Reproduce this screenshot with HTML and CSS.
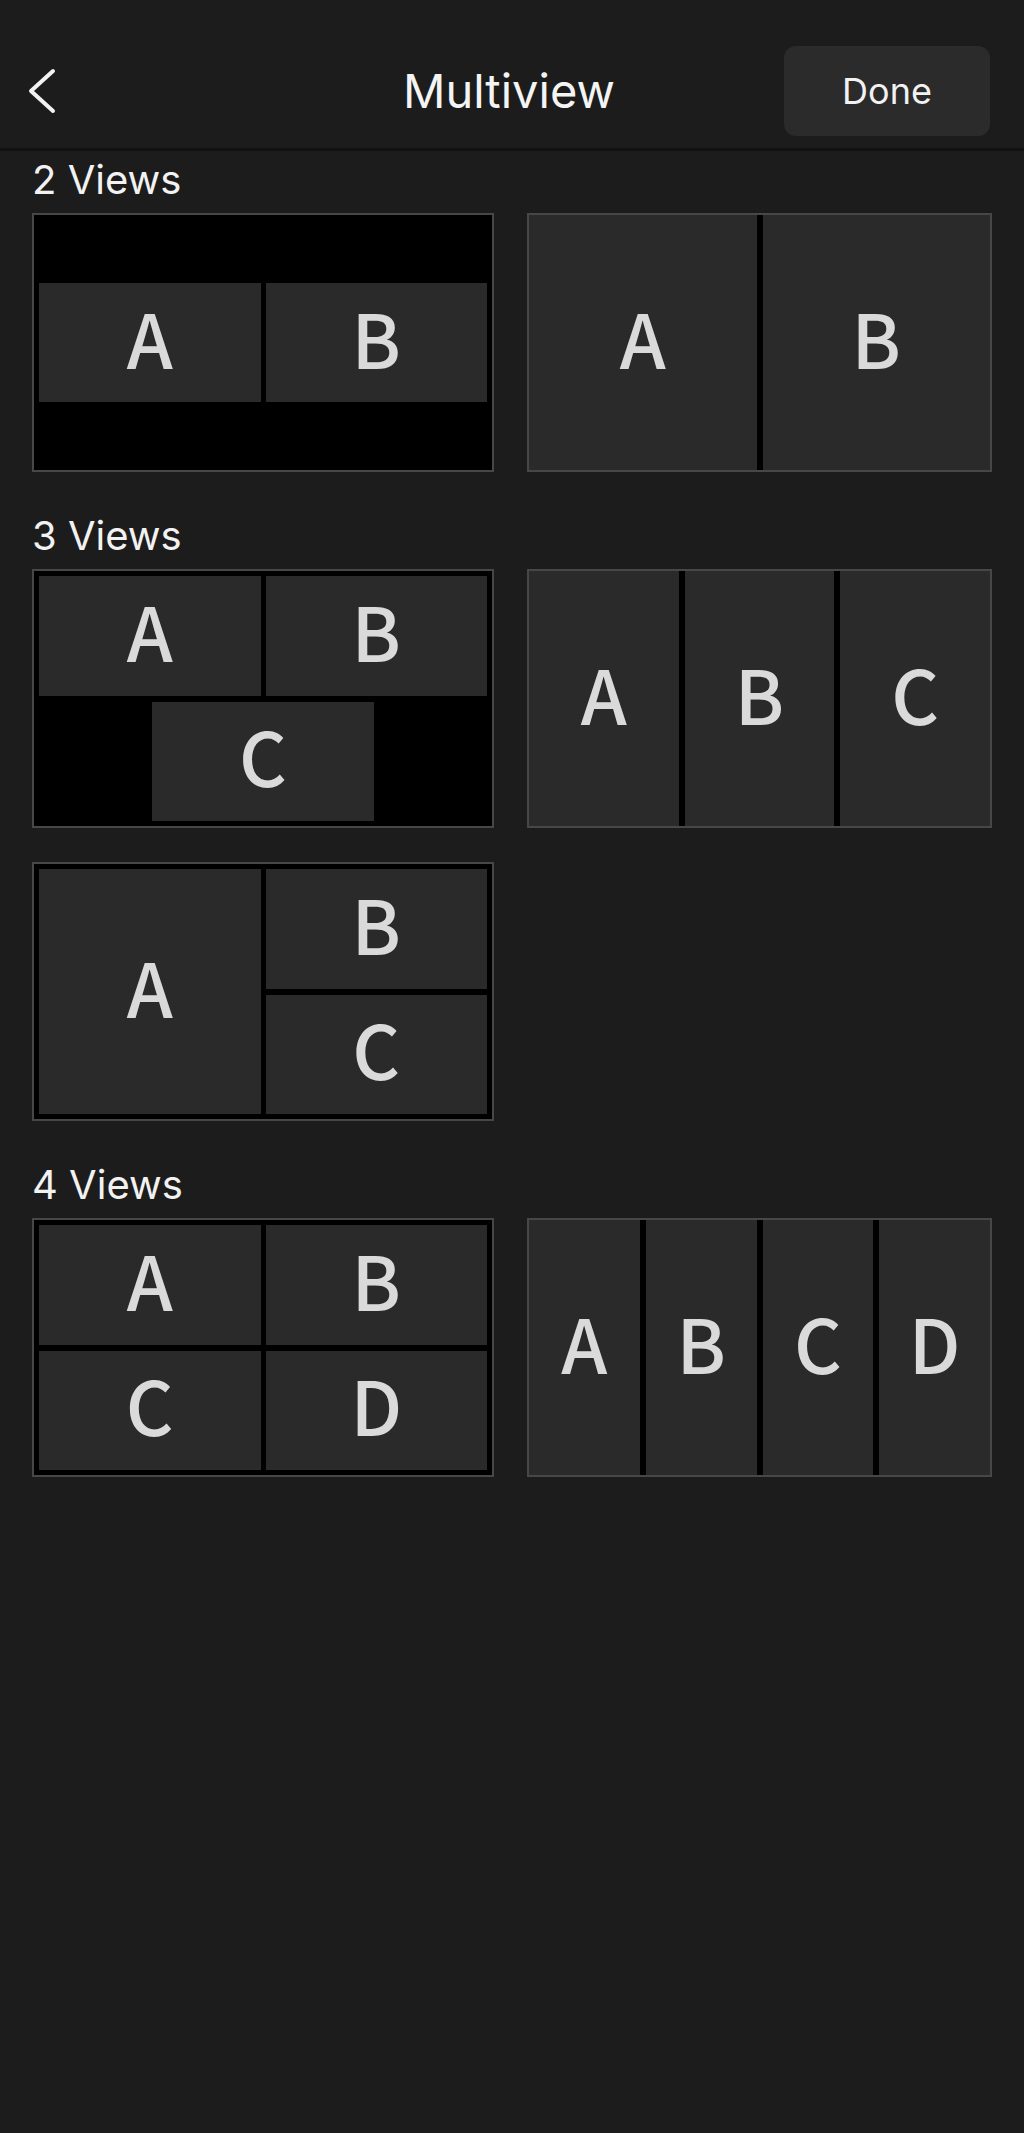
FILE: index.html
```html
<!DOCTYPE html>
<html>
<head>
<title>Multiview</title>
<meta charset="utf-8">
<link rel="stylesheet" href="styles.css">
</head>
<body>
<div class="bar">
	<div class="bar-left">
		<svg class="back" width="30" height="46" viewBox="0 0 30 46"><polyline points="25,3 3,23 25,43" fill="none" stroke="#f2f2f2" stroke-width="4" stroke-linecap="round" stroke-linejoin="round"/></svg>
	</div>
	<h1 class="title">Multiview</h1>
	<div class="bar-right">
		<button class="done">Done</button>
	</div>
</div>

<div class="list">
	<div class="group">
		<h2 class="group-title">2 Views</h2>
		<div class="grid">
			<div class="card inset lay-2a">
				<div class="tile">A</div>
				<div class="tile">B</div>
			</div>
			<div class="card lay-cols2">
				<div class="tile">A</div>
				<div class="tile">B</div>
			</div>
		</div>
	</div>

	<div class="group">
		<h2 class="group-title">3 Views</h2>
		<div class="grid">
			<div class="card inset lay-3a">
				<div class="tile">A</div>
				<div class="tile">B</div>
				<div class="tile tile-mid">C</div>
			</div>
			<div class="card lay-cols3">
				<div class="tile">A</div>
				<div class="tile">B</div>
				<div class="tile">C</div>
			</div>
			<div class="card inset lay-3b">
				<div class="tile tile-tall">A</div>
				<div class="tile">B</div>
				<div class="tile">C</div>
			</div>
		</div>
	</div>

	<div class="group">
		<h2 class="group-title">4 Views</h2>
		<div class="grid">
			<div class="card inset lay-4a">
				<div class="tile">A</div>
				<div class="tile">B</div>
				<div class="tile">C</div>
				<div class="tile">D</div>
			</div>
			<div class="card lay-cols4">
				<div class="tile">A</div>
				<div class="tile">B</div>
				<div class="tile">C</div>
				<div class="tile">D</div>
			</div>
		</div>
	</div>
</div>
</body>
</html>
```

FILE: styles.css
```css
html {
	background: #1c1c1c;
}
body {
	margin: 0;
	padding: 0;
	min-height: 2133px;
	background: #1c1c1c;
	color: #f2f2f2;
	font-family: Inter, "Noto Sans", sans-serif;
}

/* top bar */
.bar {
	display: grid;
	grid-template-columns: 1fr auto 1fr;
	align-items: center;
	height: 90px;
	padding: 46px 34px 12px 28px;
	border-bottom: 3px solid #111;
}
.bar-left {
	display: flex;
	align-items: center;
}
.back {
	display: block;
}
.title {
	margin: 0;
	font-size: 47px;
	font-weight: 400;
	line-height: 56px;
	color: #f4f4f4;
}
.bar-right {
	display: flex;
	justify-content: flex-end;
}
.done {
	width: 206px;
	height: 90px;
	border: 0;
	border-radius: 12px;
	background: #2b2b2b;
	color: #f2f2f2;
	font-family: Inter, "Noto Sans", sans-serif;
	font-size: 36px;
	font-weight: 400;
	padding: 0;
}

/* layout list */
.list {
	padding: 5px 32px 0 32px;
}
.group + .group {
	margin-top: 40px;
}
.group-title {
	margin: 0 0 9px 0;
	font-size: 40px;
	font-weight: 400;
	line-height: 48px;
	color: #f2f2f2;
}
.grid {
	display: grid;
	grid-template-columns: 462px 465px;
	column-gap: 33px;
	row-gap: 34px;
}

/* cards */
.card {
	box-sizing: border-box;
	height: 259px;
	border: 2px solid #474747;
	background: #000;
	display: grid;
}
.card.inset {
	padding: 5px;
	gap: 6px 5px;
}
.tile {
	box-sizing: border-box;
	padding-bottom: 12px;
	background: #2a2a2a;
	color: #dadada;
	font-family: "Noto Sans CJK JP", "Noto Sans", sans-serif;
	font-size: 74px;
	font-weight: 500;
	display: flex;
	align-items: center;
	justify-content: center;
	line-height: 1;
}

.lay-2a {
	grid-template-columns: 1fr 1fr;
	grid-template-rows: 119px;
	align-content: center;
}
.lay-3a {
	grid-template-columns: 1fr 1fr;
	grid-template-rows: 1fr 1fr;
}
.tile-mid {
	grid-column: 1 / span 2;
	justify-self: center;
	width: calc(50% - 2.5px);
}
.lay-3b {
	grid-template-columns: 1fr 1fr;
	grid-template-rows: 1fr 1fr;
}
.tile-tall {
	grid-row: 1 / span 2;
}
.lay-4a {
	grid-template-columns: 1fr 1fr;
	grid-template-rows: 1fr 1fr;
}
.lay-cols2 {
	grid-template-columns: repeat(2, 1fr);
	column-gap: 6px;
}
.lay-cols3 {
	grid-template-columns: repeat(3, 1fr);
	column-gap: 6px;
}
.lay-cols4 {
	grid-template-columns: repeat(4, 1fr);
	column-gap: 6px;
}
```
